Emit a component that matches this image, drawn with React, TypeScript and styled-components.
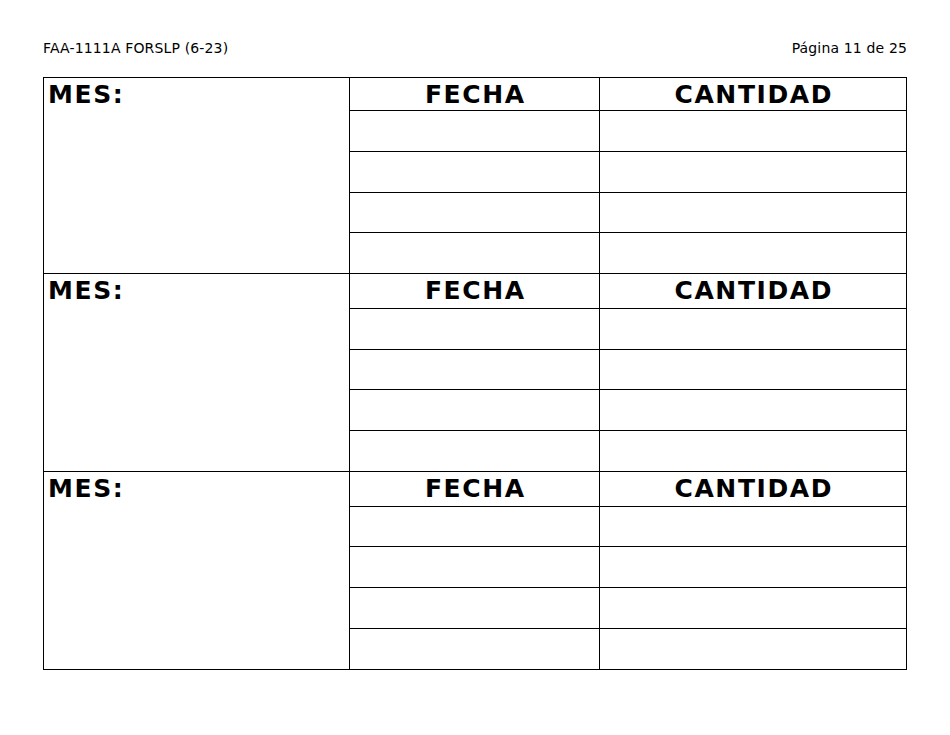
import React from "react";
import styled, { createGlobalStyle } from "styled-components";

const Global = createGlobalStyle`
  html, body { margin: 0; padding: 0; background: #ffffff; }
  body { font-family: "DejaVu Sans", Verdana, sans-serif; color: #000; }
`;

const Page = styled.div`
  width: 950px;
  height: 735px;
  box-sizing: border-box;
  padding: 40px 0 0 43px;
`;

const TopBar = styled.div`
  width: 864px;
  display: flex;
  justify-content: space-between;
  align-items: baseline;
  font-size: 14px;
  letter-spacing: 0.15px;
  line-height: 17px;
  height: 37px;
`;

const Grid = styled.div<{ $rows: string }>`
  display: grid;
  grid-template-columns: 305px 249px 306px;
  grid-template-rows: ${(p) => p.$rows};
  gap: 1px;
  padding: 1px;
  background: #000;
  width: max-content;
`;

const MonthCell = styled.div`
  grid-row: span 5;
  background: #fff;
  padding: 2px 0 0 4px;
  font-size: 25px;
  font-weight: bold;
  letter-spacing: 1.6px;
  line-height: 30px;
`;

const HeadCell = styled.div`
  background: #fff;
  text-align: center;
  padding: 2px 0 0 1.6px;
  font-size: 25px;
  font-weight: bold;
  letter-spacing: 1.6px;
  line-height: 30px;
`;

const Cell = styled.div`
  background: #fff;
`;

const blocks = [
  [32, 40, 40, 39, 40],
  [34, 40, 39, 40, 40],
  [34, 39, 40, 40, 40],
];

export default function App() {
  const rows = blocks.flat().map((h) => `${h}px`).join(" ");
  return (
    <Page>
      <Global />
      <TopBar>
        <span>FAA-1111A FORSLP (6-23)</span>
        <span>Página 11 de 25</span>
      </TopBar>
      <Grid $rows={rows}>
        {blocks.map((_, b) => (
          <React.Fragment key={b}>
            <MonthCell>MES:</MonthCell>
            <HeadCell>FECHA</HeadCell>
            <HeadCell>CANTIDAD</HeadCell>
            {Array.from({ length: 8 }).map((__, i) => (
              <Cell key={i} />
            ))}
          </React.Fragment>
        ))}
      </Grid>
    </Page>
  );
}
